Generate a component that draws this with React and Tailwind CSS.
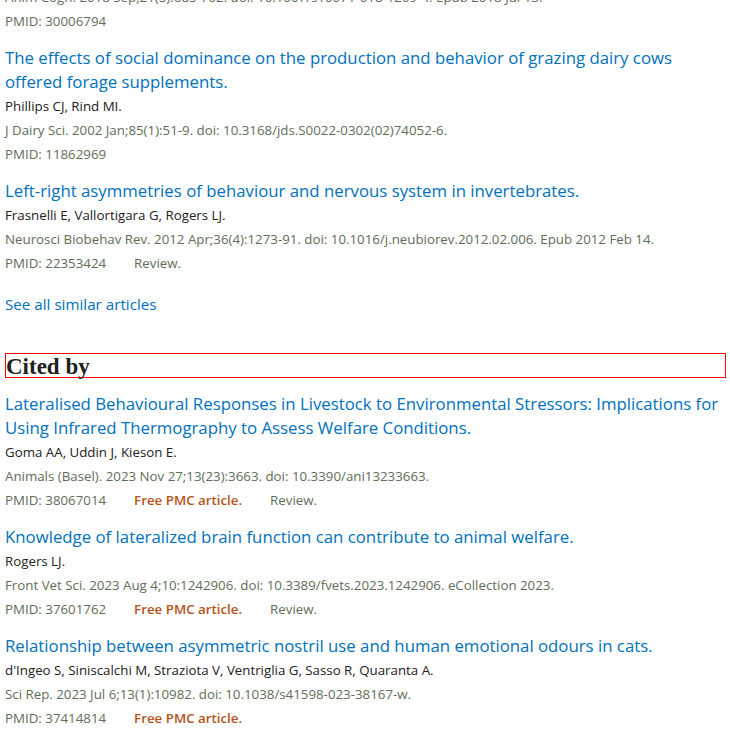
import React from "react";

const similar = [
  {
    title:
      "The effects of social dominance on the production and behavior of grazing dairy cows offered forage supplements.",
    authors: "Phillips CJ, Rind MI.",
    citation: "J Dairy Sci. 2002 Jan;85(1):51-9. doi: 10.3168/jds.S0022-0302(02)74052-6.",
    pmid: "11862969",
  },
  {
    title: "Left-right asymmetries of behaviour and nervous system in invertebrates.",
    authors: "Frasnelli E, Vallortigara G, Rogers LJ.",
    citation:
      "Neurosci Biobehav Rev. 2012 Apr;36(4):1273-91. doi: 10.1016/j.neubiorev.2012.02.006. Epub 2012 Feb 14.",
    pmid: "22353424",
    review: true,
  },
];

const citedBy = [
  {
    title:
      "Lateralised Behavioural Responses in Livestock to Environmental Stressors: Implications for Using Infrared Thermography to Assess Welfare Conditions.",
    authors: "Goma AA, Uddin J, Kieson E.",
    citation: "Animals (Basel). 2023 Nov 27;13(23):3663. doi: 10.3390/ani13233663.",
    pmid: "38067014",
    free: true,
    review: true,
  },
  {
    title: "Knowledge of lateralized brain function can contribute to animal welfare.",
    authors: "Rogers LJ.",
    citation:
      "Front Vet Sci. 2023 Aug 4;10:1242906. doi: 10.3389/fvets.2023.1242906. eCollection 2023.",
    pmid: "37601762",
    free: true,
    review: true,
  },
  {
    title: "Relationship between asymmetric nostril use and human emotional odours in cats.",
    authors: "d'Ingeo S, Siniscalchi M, Straziota V, Ventriglia G, Sasso R, Quaranta A.",
    citation: "Sci Rep. 2023 Jul 6;13(1):10982. doi: 10.1038/s41598-023-38167-w.",
    pmid: "37414814",
    free: true,
  },
];

const Meta = ({ item }) => (
  <>
    <div className="text-[13.3px] leading-[24px] text-[#212121]">{item.authors}</div>
    <div className="text-[13.3px] leading-[24px] text-[#5e6e58]">{item.citation}</div>
    <div className="flex text-[13.3px] leading-[24px] text-[#5e6e58]">
      <span className="mr-[28px]">PMID: {item.pmid}</span>
      {item.free && (
        <span className="mr-[28px] font-semibold text-[#b5521a]">Free PMC article.</span>
      )}
      {item.review && <span>Review.</span>}
    </div>
  </>
);

const Article = ({ item }) => (
  <div className="mb-[13px]">
    <a href="#" className="block text-[16.8px] leading-[24px] text-[#0071bc]">
      {item.title}
    </a>
    <Meta item={item} />
  </div>
);

const App = () => {
  return (
    <div
      className="min-h-screen bg-white pl-[5px] pr-[4px] overflow-hidden"
      style={{ fontFamily: '"Open Sans", sans-serif' }}
    >
      <div className="mt-[-15px]">
        {/* tail of the previous entry, scrolled off the top */}
        <div className="mb-[13px]">
          <div className="text-[13.3px] leading-[24px] text-[#5e6e58] whitespace-nowrap">
            Anim Cogn. 2018 Sep;21(5):685-702. doi: 10.1007/s10071-018-1209-4. Epub 2018 Jul 13.
          </div>
          <div className="text-[13.3px] leading-[24px] text-[#5e6e58]">PMID: 30006794</div>
        </div>

        {similar.map((item) => (
          <Article key={item.pmid} item={item} />
        ))}

        {/* collapses with the article's bottom margin */}
        <a href="#" className="mt-[17px] block text-[15.2px] leading-[24px] text-[#0071bc]">
          See all similar articles
        </a>

        <h2
          className="mt-[37px] mb-[14px] h-[25px] border border-[#ff0000] pt-[2px] text-[23px] leading-[21px] font-bold text-[#212121]"
          style={{ fontFamily: '"Liberation Serif", serif' }}
        >
          Cited by
        </h2>

        {citedBy.map((item) => (
          <Article key={item.pmid} item={item} />
        ))}
      </div>
    </div>
  );
};

export default App;
